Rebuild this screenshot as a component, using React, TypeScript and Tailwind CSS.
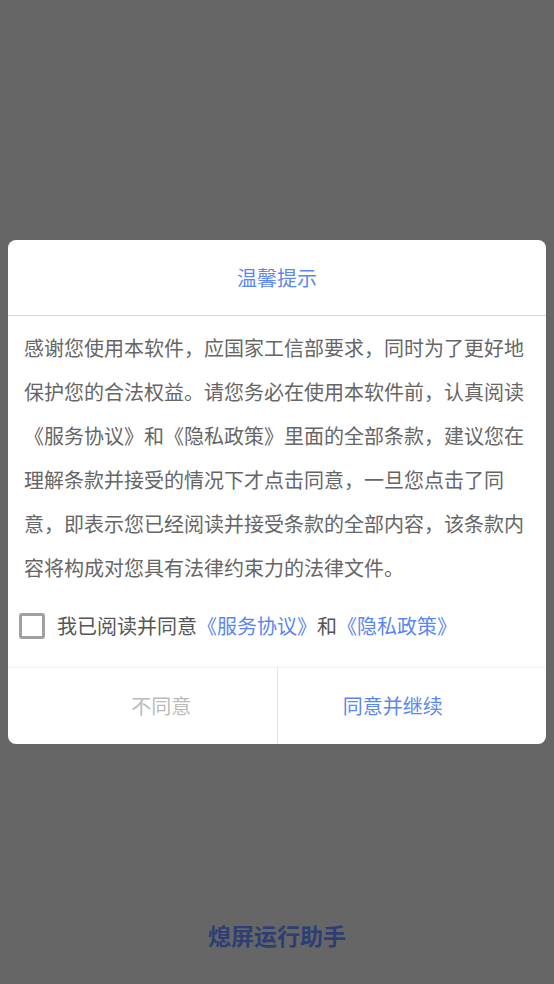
import React from "react";

const font = { fontFamily: '"Noto Sans CJK SC", "Noto Sans", sans-serif' };

export default function App() {
  const lines = [
    "感谢您使用本软件，应国家工信部要求，同时为了更好地",
    "保护您的合法权益。请您务必在使用本软件前，认真阅读",
    "《服务协议》和《隐私政策》里面的全部条款，建议您在",
    "理解条款并接受的情况下才点击同意，一旦您点击了同",
    "意，即表示您已经阅读并接受条款的全部内容，该条款内",
    "容将构成对您具有法律约束力的法律文件。",
  ];

  return (
    <div
      className="w-[554px] h-[984px] bg-[#666666] flex flex-col items-center overflow-hidden"
      style={font}
    >
      {/* dialog */}
      <div className="mt-[240px] w-[538px] bg-white rounded-[8px] flex flex-col">
        <div className="h-[76px] flex items-center justify-center text-[20px] text-[#5b87f2] border-b border-[#d6d6d6]">
          温馨提示
        </div>
        <div className="px-[16px] pt-[10px] text-[20px] leading-[44px] text-[#666666] whitespace-nowrap">
          {lines.map((l, i) => (
            <div key={i}>{l}</div>
          ))}
        </div>
        <div className="flex items-center h-[77px] pl-[11px] pb-[6px] text-[20px]">
          <span className="w-[26px] h-[26px] border-[3px] border-[#a0a0a0] rounded-[3px] shrink-0" />
          <span className="ml-[12px] text-[#555555]">我已阅读并同意</span>
          <span className="text-[#5b87f2]">《服务协议》</span>
          <span className="text-[#555555]">和</span>
          <span className="text-[#5b87f2]">《隐私政策》</span>
        </div>
        <div className="flex h-[77px] border-t border-[#f2f2f2] text-[20px]">
          <div className="flex-1 flex items-center justify-center pl-[38px] text-[#bbbbbb] border-r border-[#e4e4e4]">
            不同意
          </div>
          <div className="flex-1 flex items-center justify-center pr-[38px] text-[#5b87f2]">
            同意并继续
          </div>
        </div>
      </div>
      <div className="mt-[174px] text-[23px] font-semibold text-[#2c3e74]">熄屏运行助手</div>
    </div>
  );
}
